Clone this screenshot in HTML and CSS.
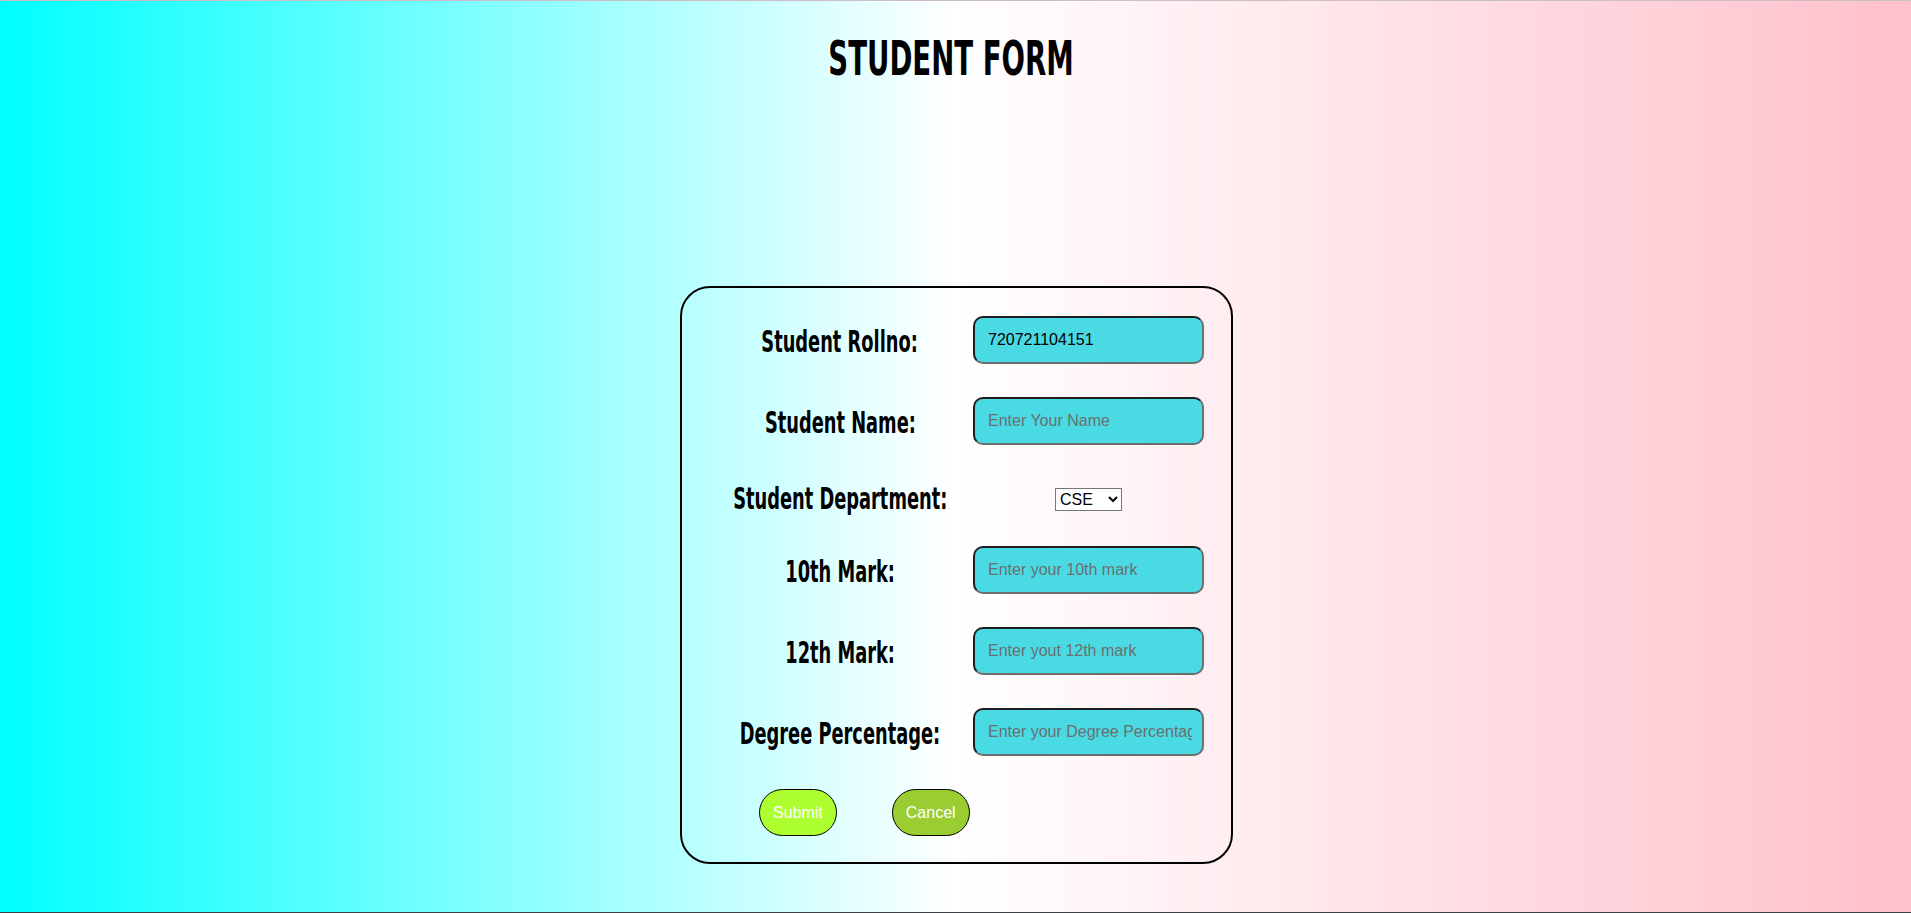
FILE: index.html
```html
<!DOCTYPE html>
<html lang="en">
<head>
<meta charset="utf-8">
<title>Student Form</title>
<link rel="stylesheet" href="styles.css">
</head>
<body>
  <h1 class="title"><span class="title-text">STUDENT FORM</span></h1>
  <form class="card">
    <div class="rows">
      <label class="label" for="roll"><span class="label-text">Student Rollno:</span></label>
      <input class="field" id="roll" type="text" value="720721104151">

      <label class="label" for="name"><span class="label-text">Student Name:</span></label>
      <input class="field" id="name" type="text" placeholder="Enter Your Name">

      <label class="label label-dept" for="dept"><span class="label-text">Student Department:</span></label>
      <select class="dept" id="dept">
        <option>CSE</option>
        <option>ECE</option>
        <option>EEE</option>
        <option>MECH</option>
        <option>CIVIL</option>
      </select>

      <label class="label" for="m10"><span class="label-text">10th Mark:</span></label>
      <input class="field" id="m10" type="text" placeholder="Enter your 10th mark">

      <label class="label" for="m12"><span class="label-text">12th Mark:</span></label>
      <input class="field" id="m12" type="text" placeholder="Enter yout 12th mark">

      <label class="label" for="deg"><span class="label-text">Degree Percentage:</span></label>
      <input class="field" id="deg" type="text" placeholder="Enter your Degree Percentage">

      <div class="actions">
        <button class="btn btn-submit" type="submit">Submit</button>
        <button class="btn btn-cancel" type="reset">Cancel</button>
      </div>
    </div>
  </form>
</body>
</html>
```
FILE: styles.css
```css
html, body {
  margin: 0;
  padding: 0;
}

body {
  box-sizing: border-box;
  height: 100vh;
  border-top: 1px solid #cbbfc5;
  border-bottom: 1px solid #3c4043;
  background: linear-gradient(to right, #00ffff, #ffffff, #ffc0cb);
  font-family: "Liberation Sans", Arial, sans-serif;
  overflow: hidden;
}

.title {
  margin: 33px 0 0;
  padding-right: 8px;
  text-align: center;
  font-family: "DejaVu Sans Condensed", "DejaVu Sans", sans-serif;
  font-stretch: condensed;
  font-weight: bold;
  font-size: 48px;
  line-height: 48px;
  color: #000;
}

.title-text {
  display: inline-block;
  white-space: nowrap;
  transform: scaleX(0.639);
}

.card {
  box-sizing: border-box;
  width: 553px;
  margin: 204px 0 0 680px;
  padding: 28px 27px 26px 27px;
  border: 2px solid #000;
  border-radius: 30px;
}

.rows {
  display: grid;
  grid-template-columns: 262px 231px;
  column-gap: 2px;
  row-gap: 33px;
  align-items: center;
}

.label {
  display: flex;
  justify-content: center;
  padding-top: 2px;
  font-family: "DejaVu Sans Condensed", "DejaVu Sans", sans-serif;
  font-stretch: condensed;
  font-weight: bold;
  font-size: 30px;
  line-height: 35px;
  color: #000;
}

.label-text {
  display: inline-block;
  white-space: nowrap;
  transform: scaleX(0.66);
}

.label-dept {
  padding-top: 6px;
  line-height: 29px;
}

.field {
  box-sizing: border-box;
  width: 231px;
  height: 48px;
  margin: 0;
  padding: 0 10px 0 13px;
  border-width: 2px;
  border-style: solid;
  border-color: #1e1e1e #6e6e6e #6e6e6e #1e1e1e;
  border-radius: 10px;
  background: #4adae4;
  font-family: "Liberation Sans", Arial, sans-serif;
  font-size: 16px;
  color: #000;
  outline: none;
}

.field::placeholder {
  color: #6a6f70;
}

.dept {
  justify-self: center;
  align-self: end;
  width: 67px;
  height: 23px;
  margin: 0 0 2px;
  font-family: "Liberation Sans", Arial, sans-serif;
  font-size: 16px;
  color: #000;
  background: #fff;
  border: 1px solid #767676;
  border-radius: 0;
}

.actions {
  grid-column: 1 / -1;
  display: flex;
  gap: 55px;
  padding-left: 50px;
}

.btn {
  box-sizing: border-box;
  height: 47px;
  padding: 0 13px;
  border: 1px solid #000;
  border-radius: 24px;
  font-family: "Liberation Sans", Arial, sans-serif;
  font-size: 16px;
  color: #fff;
  cursor: pointer;
}

.btn-submit {
  background: #adff2f;
}

.btn-cancel {
  background: #9acd32;
}
```
